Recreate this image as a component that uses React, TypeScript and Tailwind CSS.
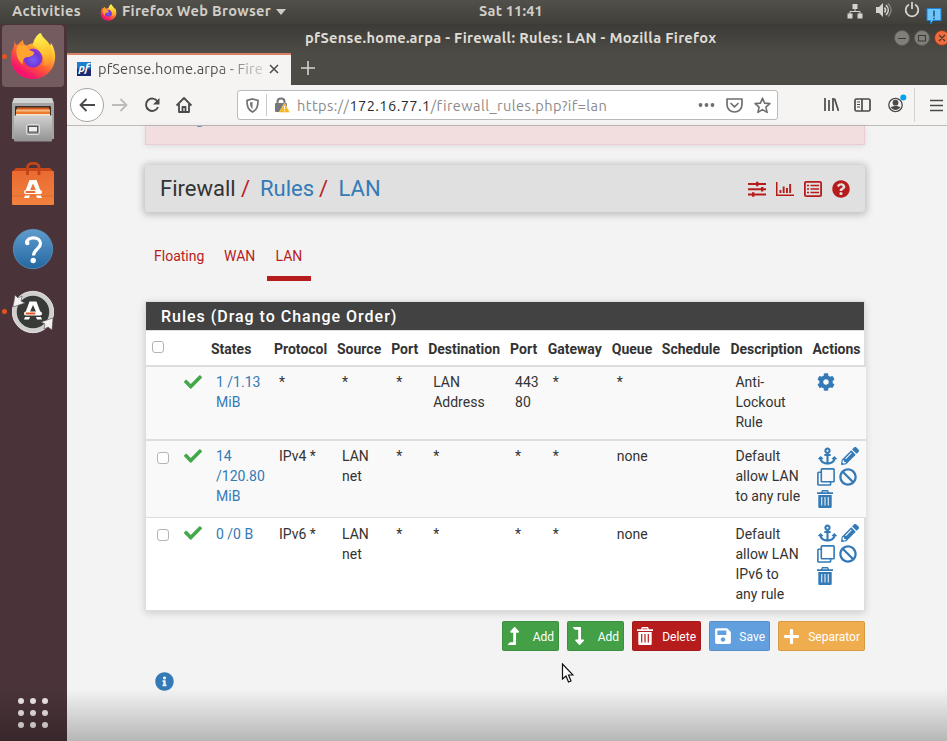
import type { ReactNode } from "react";
import { FaAnchor, FaBan, FaCog, FaPencilAlt, FaPlus, FaQuestionCircle, FaInfoCircle, FaCheck, FaLevelUpAlt, FaLevelDownAlt, FaSave } from "react-icons/fa";

function FirefoxLogo({ size }: { size: number }) {
  return (
    <svg width={size} height={size} viewBox="0 0 46 48" className="shrink-0">
      <defs>
        <linearGradient id="fxBody" x1="0.8" y1="0.1" x2="0.25" y2="0.95">
          <stop offset="0" stopColor="#fff44f" />
          <stop offset="0.3" stopColor="#ffb02e" />
          <stop offset="0.6" stopColor="#ff5a36" />
          <stop offset="0.9" stopColor="#f5156c" />
        </linearGradient>
        <radialGradient id="fxGlobe" cx="0.5" cy="0.6" r="0.6">
          <stop offset="0" stopColor="#7a5cf5" />
          <stop offset="0.6" stopColor="#7039d8" />
          <stop offset="1" stopColor="#a136c4" />
        </radialGradient>
        <linearGradient id="fxTail" x1="0.6" y1="0" x2="0.7" y2="1">
          <stop offset="0" stopColor="#fff44f" />
          <stop offset="0.6" stopColor="#ffc22e" />
          <stop offset="1" stopColor="#ff8a2c" />
        </linearGradient>
      </defs>
      <path fill="url(#fxBody)" d="M5 8c0 3 0 4 2 5l6-5c0 3 1 5 3 6 3-2 6-3 9-2 0-5 3-9 6-11 1 5 8 8 9 13l1-3c2 3 5 9 4 16-1 12-11 20-22 20C10 47 1 38 1 26 1 20 3 17 4 14z" />
      <circle cx="23" cy="26" r="9.500" fill="url(#fxGlobe)" />
      <path fill="url(#fxTail)" d="M23 13c0-5 4-10 7-12 1 5 9 8 11 15 1 5 1 9-1 13-2 4-5 5-7 5 3-7-2-15-10-21z" />
      <path fill="#ffa431" d="M7 15c3-3 7-3 10-1 1 3 3 5 7 6 1 3-4 5-7 5-4 1-5 4-4 8-5-4-8-11-6-18z" />
    </svg>
  );
}

function FilesIcon() {
  return (
    <svg width="42" height="44" viewBox="0 0 42 44">
      <defs>
        <linearGradient id="cab" x1="0" y1="0" x2="0" y2="1">
          <stop offset="0" stopColor="#d0d0d0" />
          <stop offset="1" stopColor="#929292" />
        </linearGradient>
      </defs>
      <path d="M2 0h38l2 5v36H0V5z" fill="#a5a5a5" />
      <path d="M2 0h38l1.500 5H.5z" fill="#d2d2d2" />
      <rect x="3" y="8" width="36" height="11" rx="1" fill="#3a302a" />
      <rect x="5" y="9.500" width="32" height="3" fill="#d95a1c" />
      <rect x="4" y="11.500" width="34" height="4" fill="#f4bc80" />
      <rect x="4" y="13.500" width="34" height="5" fill="#ec7a2e" />
      <rect x="4" y="16" width="34" height="2" fill="#f7e2cb" />
      <rect x="2" y="17.500" width="38" height="26" rx="1" fill="url(#cab)" />
      <rect x="14.500" y="26.500" width="13" height="10" rx="1.500" fill="#999" stroke="#dedede" />
      <rect x="16.500" y="28.500" width="9" height="5.500" fill="#eee" stroke="#555" strokeWidth="1" />
    </svg>
  );
}

function LetterA({ bar }: { bar: string }) {
  return (
    <g>
      <path d="M-3.500-9.500h7L8.500 4h-4L0-6l-4.500 10h-4z" fill="#fff" />
      <rect x="-9" y="0.500" width="18" height="4" rx="2" fill="#fff" />
      <rect x="-7.500" y="1.500" width="10" height="2" rx="1" fill={bar} />
      <path d="M-8 6h5l-1 2.500h-5zM3 6h5l1 2.500H4z" fill="#fff" />
    </g>
  );
}

function SoftwareIcon() {
  return (
    <svg width="42" height="44" viewBox="0 0 42 44">
      <defs>
        <linearGradient id="bag" x1="0" y1="0" x2="0" y2="1">
          <stop offset="0" stopColor="#ea6a31" />
          <stop offset="1" stopColor="#f0823f" />
        </linearGradient>
      </defs>
      <path d="M1 9l3-3h34l3 3v4H1z" fill="#c9481a" />
      <rect y="9" width="42" height="34" rx="1" fill="url(#bag)" />
      <path d="M0 34h42" stroke="#d9622a" strokeWidth="0.700" />
      <path d="M15.500 13V5c0-5 11.500-5 11.500 0v8" fill="none" stroke="#bf4517" strokeWidth="2.800" />
      <g transform="translate(21 27.500)"><LetterA bar="#e9692f" /></g>
    </svg>
  );
}

function HelpIcon() {
  return (
    <svg width="42" height="42" viewBox="0 0 42 42">
      <defs>
        <linearGradient id="help" x1="0" y1="0" x2="0" y2="1">
          <stop offset="0" stopColor="#5f9dcd" />
          <stop offset="1" stopColor="#2467a2" />
        </linearGradient>
      </defs>
      <circle cx="21" cy="21" r="19.700" fill="url(#help)" stroke="#5b8fbd" strokeWidth="0.800" />
      <path d="M14.500 15c0-7 14-7 14 .500 0 5-6.500 5.500-7 12" fill="none" stroke="#fff" strokeWidth="3.200" />
      <circle cx="15.300" cy="15" r="2.200" fill="#fff" />
      <circle cx="21.200" cy="32.500" r="2.700" fill="#fff" />
    </svg>
  );
}

function UpdaterIcon() {
  return (
    <svg width="42" height="44" viewBox="0 0 42 44">
      <circle cx="21" cy="22" r="18.500" fill="#383a38" stroke="#cfcfcf" strokeWidth="4.500" />
      <circle cx="21" cy="22" r="20.700" fill="none" stroke="#ededed" strokeWidth="0.800" />
      <path d="M1 17L3 5l3 3 4-2-1 5 4 2z" fill="#f2f2f2" stroke="#55464a" strokeWidth="0.600" />
      <path d="M41 28l-1 12-4-3-4 2 1-5-4-2z" fill="#f2f2f2" stroke="#55464a" strokeWidth="0.600" />
      <g transform="translate(21 21)"><LetterA bar="#e4541c" /></g>
    </svg>
  );
}

function Dock() {
  return (
    <aside className="flex h-[717px] w-[67px] shrink-0 flex-col bg-[#4a343a]">
      <div className="relative ml-0.5 mt-px flex h-[62px] w-[62px] items-center justify-center rounded bg-[#745b60]">
        <span className="absolute left-0 top-[29px] h-[5px] w-[5px] rounded-full bg-[#e2551f]" />
        <FirefoxLogo size={48} />
      </div>
      <div className="ml-3 mt-[11px]"><FilesIcon /></div>
      <div className="ml-3 mt-5"><SoftwareIcon /></div>
      <div className="ml-3 mt-[22px]"><HelpIcon /></div>
      <div className="relative mt-[20px] pl-3">
        <span className="absolute left-0.5 top-[19px] h-[5px] w-[5px] rounded-full bg-[#e2551f]" />
        <UpdaterIcon />
      </div>
      <div className="mb-[13px] ml-[18px] mt-auto grid w-[30px] grid-cols-3 gap-1.5">
        {[0, 1, 2, 3, 4, 5, 6, 7, 8].map((n) => (
          <span key={n} className="h-1.5 w-1.5 rounded-full bg-[#f1e9ea]" />
        ))}
      </div>
    </aside>
  );
}

function SystemBar() {
  return (
    <div className="flex h-6 items-center bg-linear-to-b from-[#51504a] to-[#403f3a] pl-3 text-[14.600px] font-semibold text-[#d0cdc7]">
      <span className="w-[88px] -translate-y-px tracking-[0.400px]">Activities</span>
      <FirefoxLogo size={17} />
      <span className="ml-[5px] w-[150px] -translate-y-px whitespace-nowrap tracking-[0.310px]">Firefox Web Browser</span>
      <svg width="10" height="6" className="ml-[4px]"><path d="M0 0h10L5 6z" fill="#cfccc5" /></svg>
      <span className="ml-[193px] w-[70px] -translate-y-px whitespace-nowrap tracking-[0.150px]">Sat 11:41</span>
      <svg className="-mt-0.5 ml-auto mr-[12px]" width="16" height="16" viewBox="0 0 16 16" fill="#d5d3ce">
        <path d="M5.500 1h5v5h-5zM0.500 10.500h5v5h-5zM10.500 10.500h5v5h-5z" />
        <path d="M8 5v4M3 11V8.500h10V11" stroke="#d5d3ce" strokeWidth="1" fill="none" />
      </svg>
      <svg className="-mt-1 mr-[12px]" width="17" height="16" viewBox="0 0 17 16" fill="none" stroke="#d5d3ce" strokeWidth="1.600">
        <path d="M1 5h3l4-4v14l-4-4H1z" fill="#d5d3ce" stroke="none" />
        <path d="M9.500 5.500c1.300 1.500 1.300 3.500 0 5M11 3c3 3 3 7 0 10" />
        <path d="M13 1.500c4 4 4 9 0 13" stroke="#84827c" />
      </svg>
      <svg className="-mt-1" width="16" height="16" viewBox="0 0 16 16" fill="none" stroke="#d5d3ce" strokeWidth="1.800">
        <path d="M5 2.500a6.300 6.300 0 1 0 6 0M8 0v7" />
      </svg>
      <svg className="ml-1.5 mt-[8px] self-start" width="16" height="16" viewBox="0 0 16 16">
        <path d="M1 .500h14v12H7L4.500 16v-3.500H1z" fill="#6cc5fb" stroke="#1a83d8" />
        <path d="M8 2.500v6M8 9.800v1.500" stroke="#173049" strokeWidth="1.200" />
      </svg>
      <span className="w-[5px]" />
    </div>
  );
}

function TitleBar() {
  return (
    <div className="flex h-[29px] bg-linear-to-b from-[#3c3b37] to-[#4c4b45] text-[#dfdcd5]">
      <div className="flex-1 pl-[238px] pt-[3px] text-[14.600px] font-bold leading-[22px]">
        <span className="whitespace-nowrap tracking-[0.320px]">pfSense.home.arpa - Firewall: Rules: LAN - Mozilla Firefox</span>
      </div>
      <svg width="53" height="18" className="mt-[5px]" viewBox="0 0 53 18">
        <circle cx="8" cy="9" r="7.500" fill="#817f79" stroke="#5b5a54" />
        <circle cx="28" cy="9" r="7.500" fill="#817f79" stroke="#5b5a54" />
        <circle cx="48" cy="9" r="7.500" fill="#f06a3b" stroke="#7a3c25" />
        <path d="M4 9.500h8M24.500 6.500h7v5.500h-7zM45 6l6 6M51 6l-6 6" fill="none" stroke="#3b3a36" strokeWidth="1.100" />
      </svg>
    </div>
  );
}

function TabStrip() {
  return (
    <div className="flex h-8 bg-[#4c4b45]">
      <div className="flex h-8 w-[224px] items-center border-t-2 border-[#d98163] bg-[#f5f4f2] pb-[2px] pl-2.5">
        <span className="flex h-[14px] w-[14px] items-center justify-center bg-linear-to-b from-[#1b7fd0] from-35% to-[#1b2a6e] to-60% pb-px text-[11px] font-bold italic leading-none text-white">pf</span>
        <span className="ml-[7px] w-[167px] whitespace-nowrap bg-linear-to-r from-[#4b4b4b] from-70% to-[#4b4b4b]/20 bg-clip-text text-[14.600px] leading-5 tracking-[0.120px] text-transparent">pfSense.home.arpa - Fire</span>
        <svg className="ml-[4px]" width="10" height="10"><path d="M1 1l8 8M9 1L1 9" stroke="#4a4a4a" strokeWidth="1.500" /></svg>
      </div>
      <svg className="ml-2.5 mt-2" width="14" height="14"><path d="M7 0v14M0 7h14" stroke="#d7d4cc" strokeWidth="1.600" /></svg>
    </div>
  );
}

function Toolbar() {
  return (
    <div className="flex h-[41px] items-center border-b border-[#bdbbb9] bg-[#f5f4f2] pl-[3px]">
      <span className="flex h-[34px] w-[34px] items-center justify-center rounded-full border border-[#a7a6a5] bg-white">
        <svg width="16" height="14" fill="none" stroke="#4a4a4a" strokeWidth="1.800"><path d="M16 7H1.500M7.500 1l-6 6 6 6" /></svg>
      </span>
      <svg className="ml-2" width="16" height="14" fill="none" stroke="#bbb" strokeWidth="1.800"><path d="M0 7h14.500M8.500 1l6 6-6 6" /></svg>
      <svg className="ml-[16px]" width="16" height="16" viewBox="0 0 16 16" fill="none" stroke="#4a4a4a" strokeWidth="1.900">
        <path d="M13.500 4.500A6.200 6.200 0 1 0 14 10" /><path d="M15.500 1v6.500H9z" fill="#4a4a4a" stroke="none" />
      </svg>
      <svg className="ml-4" width="16" height="16" viewBox="0 0 16 16" fill="none" stroke="#4a4a4a" strokeWidth="1.800" strokeLinejoin="round">
        <path d="M0.500 8.500L8 1l7.500 7.500M3 7v8h10V7" /><path d="M6.500 15v-5h3v5" />
      </svg>
      <div className="ml-[45px] flex h-[30px] w-[541px] items-center rounded-[3px] border border-[#bcbab8] bg-white">
        <svg className="ml-2" width="13" height="15" viewBox="0 0 13 15" fill="none" stroke="#737373" strokeWidth="1.700">
          <path d="M6.500 1L12 2.500c0 6-1 9-5.500 11.500C2 11.500 1 8.500 1 2.500z" /><path d="M6.500 4v7C4.500 9.500 4 7.500 4 4.500z" fill="#737373" stroke="none" />
        </svg>
        <span className="ml-[7px] h-[22px] w-px bg-[#c9c9c9]" />
        <svg className="ml-2" width="15" height="16" viewBox="0 0 15 16">
          <rect y="6" width="12" height="9" rx="1" fill="#777" />
          <path d="M2.500 7V4.500c0-4 7-4 7 0V7" fill="none" stroke="#777" strokeWidth="2" />
          <path d="M9.500 6L15 15.500H4z" fill="#f8b51c" stroke="#fff" strokeWidth="0.400" />
          <path d="M9.500 9v3M9.500 13v1.200" stroke="#fff" strokeWidth="1.200" />
        </svg>
        <span className="ml-[7px] w-[380px] whitespace-nowrap pt-px text-[14.600px] leading-5 tracking-[0.420px] text-[#8b8b8b]">
          https://<span className="text-[#2b2b2b]">172.16.77.1</span>/firewall_rules.php?if=lan
        </span>
        <svg className="ml-auto" width="17" height="4" fill="#6e6e6e"><circle cx="2.500" cy="2" r="1.900" /><circle cx="8.500" cy="2" r="1.900" /><circle cx="14.500" cy="2" r="1.900" /></svg>
        <svg className="ml-[11px]" width="17" height="15" viewBox="0 0 17 15" fill="none" stroke="#6e6e6e" strokeWidth="1.700" strokeLinecap="round" strokeLinejoin="round">
          <path d="M1 1h15v5.500c0 10-15 10-15 0zM5 5.500l3.500 3.300L12 5.500" />
        </svg>
        <svg className="ml-[11px] mr-1.5" width="17" height="17" viewBox="0 0 17 17" fill="none" stroke="#6e6e6e" strokeWidth="1.600" strokeLinejoin="round">
          <path d="M8.500 1.200l2.100 4.900 5.300.500-4 3.500 1.200 5.300-4.600-2.800-4.600 2.800 1.200-5.300-4-3.500 5.300-.500z" />
        </svg>
      </div>
      <svg className="ml-[46px]" width="15" height="14" fill="none" stroke="#4a4a4a"><path d="M1 0v13M5 2v11M9 0v13M10.500.500L14.500 13" strokeWidth="1.700" /></svg>
      <svg className="ml-[15px]" width="17" height="14" viewBox="0 0 17 14" fill="none" stroke="#4a4a4a" strokeWidth="1.700">
        <rect x="1" y="1" width="15" height="12" rx="1.500" /><path d="M8 1v12" /><path d="M3 4h3M3 6.500h3M3 9h3" strokeWidth="1" />
      </svg>
      <svg className="mb-[4px] ml-[17px]" width="20" height="20" viewBox="0 0 20 20">
        <circle cx="7.500" cy="12" r="6.700" fill="none" stroke="#4a4a4a" strokeWidth="1.300" />
        <circle cx="7.500" cy="9.700" r="2.900" fill="#4a4a4a" /><path d="M2.800 14.500c1-2 8.400-2 9.400 0-2 3.200-7.400 3.200-9.400 0z" fill="#4a4a4a" />
        <circle cx="15.300" cy="4.500" r="3" fill="#00a2f4" />
      </svg>
      <span className="ml-[6px] h-[34px] w-px bg-[#d3d2d0]" />
      <svg className="ml-[15px]" width="13" height="13"><path d="M0 1.500h13M0 6.500h13M0 11.500h13" stroke="#4a4a4a" strokeWidth="1.700" /></svg>
    </div>
  );
}

function Breadcrumb() {
  return (
    <header className="mt-5 flex h-[47px] items-center rounded-[3px] bg-[#e0e0e0] pl-[15px] text-[22px] text-[#333] shadow-[0_1px_7px_2px_rgba(0,0,0,0.220)]">
      <span className="w-[81px]">Firewall</span>
      <span className="w-[19px] text-[#b71c1c]">/</span>
      <a className="w-[59px] text-[#337ab7]">Rules</a>
      <span className="w-[19.500px] text-[#b71c1c]">/</span>
      <a className="text-[#337ab7]">LAN</a>
      <div className="ml-auto mr-[15px] flex items-center gap-[10px] text-[#b71c1c]">
        <svg width="18" height="16" fill="currentColor">
          <path d="M0 2h18v2H0zM0 7.200h18v2H0zM0 12.500h18v2H0zM8 .700h2.400v4.600H8zM13 5.900h2.400v4.600H13zM4 11.200h2.400v4.600H4z" />
        </svg>
        <svg width="18" height="14" fill="currentColor"><path d="M0 0h1.500v12.500H18V14H0zM3.500 8h1.900v3H3.500zM6.700 4.500h1.900V11H6.700zM10 6h1.900v5H10zM13.200 2h1.900v9h-1.900z" /></svg>
        <svg width="18" height="16" fill="none" stroke="currentColor">
          <rect x="0.900" y="0.900" width="16.200" height="14.200" rx="1.200" strokeWidth="1.800" />
          <path d="M3 4.500h2M3 8h2M3 11.500h2M6.500 4.500H15M6.500 8H15M6.500 11.500H15" strokeWidth="1.700" />
        </svg>
        <FaQuestionCircle size={18} />
      </div>
    </header>
  );
}

function CloneIcon() {
  return (
    <svg width="18" height="18" viewBox="0 0 18 18" fill="none" stroke="currentColor" strokeWidth="1.600">
      <rect x="4.300" y="0.900" width="12.800" height="12.800" rx="0.800" />
      <path d="M4.300 4.300H1.700c-.500 0-.800.300-.800.800v11.100c0 .500.300.800.800.800h11.100c.500 0 .800-.300.800-.800v-2.500" />
    </svg>
  );
}

function TrashIcon({ className, line }: { className: string; line: string }) {
  return (
    <svg className={className} viewBox="0 0 16 18" fill="currentColor">
      <path d="M5 0h6l1 2.200h4v1.700H0V2.200h4zM1.300 5h13.400v11.500c0 1-.500 1.500-1.500 1.500H2.800c-1 0-1.500-.500-1.500-1.500zM5.700 1.500l-.300.700h5.200l-.300-.700z" />
      <path d="M4.700 7v8.500M8 7v8.500M11.300 7v8.500" stroke={line} strokeWidth="1.200" />
    </svg>
  );
}

function RuleActions() {
  return (
    <div className="ml-[0.600px] text-[#337ab7]">
      <div className="flex h-[21px] items-start gap-1"><FaAnchor className="h-[18px] w-[19px]" /><FaPencilAlt className="h-[18px] w-[18px]" /></div>
      <div className="-ml-px flex h-[22px] items-start gap-1"><CloneIcon /><FaBan size={18} /></div>
      <TrashIcon className="-ml-px h-[18px] w-[16px]" line="#dce8f2" />
    </div>
  );
}

type Rule = { box: boolean; states: string[]; proto: string; source: string[]; dest: string[]; dport: string[]; queue: string; desc: string[]; row: string };

const rules: Rule[] = [
  { box: false, states: ["1 /1.13", "MiB"], proto: "*", source: ["*"], dest: ["LAN", "Address"], dport: ["443", "80"], queue: "*", desc: ["Anti-", "Lockout", "Rule"], row: "h-[74px] w-[720px] border-t-2 bg-[#f9f9f9]" },
  { box: true, states: ["14", "/120.80", "MiB"], proto: "IPv4 *", source: ["LAN", "net"], dest: ["*"], dport: ["*"], queue: "none", desc: ["Default", "allow LAN", "to any rule"], row: "h-[78px] w-[720px] border-t-2 bg-[#f9f9f9]" },
  { box: true, states: ["0 /0 B"], proto: "IPv6 *", source: ["LAN", "net"], dest: ["*"], dport: ["*"], queue: "none", desc: ["Default", "allow LAN", "IPv6 to", "any rule"], row: "h-[93px] w-[718px] border-t bg-white" },
];

const columns = "grid grid-cols-[31px_29px_63px_63px_54.200px_37px_81.900px_37.600px_64.100px_50px_68.700px_82px_57px]";
const headings = ["States", "Protocol", "Source", "Port", "Destination", "Port", "Gateway", "Queue", "Schedule", "Description", "Actions"];

function CheckBox() {
  return <span className="block h-3 w-3 rounded-[3px] border border-[#b4b4b4] bg-white" />;
}

function Cell({ last, children }: { last: boolean; children?: ReactNode }) {
  return <div className={`whitespace-nowrap pl-[10px] ${last ? "pt-[6px]" : "pt-[5px]"}`}>{children}</div>;
}

function Lines({ items }: { items: string[] }) {
  return <>{items.map((item) => <div key={item}>{item}</div>)}</>;
}

function RulesPanel() {
  return (
    <section className="mt-[20px] h-[310px] border border-[#ddd] bg-white text-sm leading-5 text-[#333] shadow-[0_2px_8px_rgba(0,0,0,0.160)]">
      <h2 className="h-[28px] bg-[#424242] pl-[15px] text-[16px] font-medium leading-[29px] tracking-[0.980px] text-white">Rules (Drag to Change Order)</h2>
      <div className={`${columns} h-[35px] border-t border-[#ddd] font-bold`}>
        <div className="pl-[6px] pt-[10px]"><CheckBox /></div>
        <div />
        {headings.map((name, i) => <div key={i} className="whitespace-nowrap pl-[5px] pt-2">{name}</div>)}
      </div>
      {rules.map((rule, i) => {
        const last = i === rules.length - 1;
        return (
          <div key={i} className={`${columns} ${rule.row} border-[#ddd]`}>
            <div className="pl-[11px] pt-[11px]">{rule.box && <CheckBox />}</div>
            <div className="pl-[7px] pt-[6px]"><FaCheck size={18} color="#43a84a" /></div>
            <Cell last={last}><span className="text-[#337ab7]"><Lines items={rule.states} /></span></Cell>
            <Cell last={last}>{rule.proto}</Cell>
            <Cell last={last}><Lines items={rule.source} /></Cell>
            <Cell last={last}>*</Cell>
            <Cell last={last}><Lines items={rule.dest} /></Cell>
            <Cell last={last}><Lines items={rule.dport} /></Cell>
            <Cell last={last}>*</Cell>
            <Cell last={last}>{rule.queue}</Cell>
            <Cell last={last} />
            <Cell last={last}><Lines items={rule.desc} /></Cell>
            <div className="pl-[10px] pt-[6px]">{rule.box ? <RuleActions /> : <FaCog size={18} color="#337ab7" />}</div>
          </div>
        );
      })}
    </section>
  );
}

function ActionButtons() {
  const base = "flex h-[30px] items-center rounded-[2px] border border-black/10 pl-[4px] pr-[4px] text-xs text-white";
  return (
    <div className="ml-[357px] mt-[10px] flex gap-2">
      <button className={`${base} w-[57px] bg-[#43a047]`}><FaLevelUpAlt className="h-[18px] w-[13px]" /><span className="ml-auto pt-px">Add</span></button>
      <button className={`${base} w-[57px] bg-[#43a047]`}><FaLevelDownAlt className="h-[18px] w-[13px]" /><span className="ml-auto pt-px">Add</span></button>
      <button className={`${base} w-[69px] bg-[#b71c1c]`}><TrashIcon className="h-[18px] w-[16px]" line="#b71c1c" /><span className="ml-auto pt-px">Delete</span></button>
      <button className={`${base} w-[61px] bg-[#629fdf]`}><FaSave size={18} /><span className="ml-auto pt-px">Save</span></button>
      <button className={`${base} w-[87px] bg-[#f0ad4e]`}><FaPlus size={17} /><span className="ml-auto pt-px">Separator</span></button>
    </div>
  );
}

export default function App() {
  return (
    <div className="relative h-[741px] w-[947px] overflow-hidden bg-[#f3f3f3] font-['Ubuntu','Noto_Sans',sans-serif]">
      <SystemBar />
      <div className="flex">
        <Dock />
        <div className="w-[880px]">
          <TitleBar />
          <TabStrip />
          <Toolbar />
          <main className="ml-[78px] w-[720px] font-['Roboto',sans-serif]">
            <div className="h-[19px] border border-t-0 border-[#ebccd1] bg-[#f2dede] shadow-[0_1px_6px_rgba(0,0,0,0.100)]">
              <div className="ml-[51px] h-px w-[5px] rounded-b bg-[#6b91bf]" />
            </div>
            <Breadcrumb />
            <nav className="ml-px mt-[32px] flex h-[37px] text-sm leading-6 text-[#b71c1c]">
              <a className="w-[70px] pl-[8px]">Floating</a>
              <a className="w-[51px] pl-[8px]">WAN</a>
              <a className="w-[44px] border-b-[5px] border-[#b71c1c] pl-[8.500px]">LAN</a>
            </nav>
            <RulesPanel />
            <ActionButtons />
            <FaInfoCircle size={19} color="#337ab7" className="ml-[10px] mt-[21px]" />
          </main>
        </div>
      </div>
      <div className="pointer-events-none absolute inset-x-0 bottom-0 h-[52px] bg-linear-to-b from-transparent to-black/25" />
      <svg className="absolute left-[561px] top-[663px]" width="13" height="20" viewBox="0 0 13 20">
        <path d="M1.500 1v15l3.500-3 2.500 6 2.500-1-2.500-6H12z" fill="#fff" stroke="#111" strokeWidth="1.200" />
      </svg>
    </div>
  );
}
